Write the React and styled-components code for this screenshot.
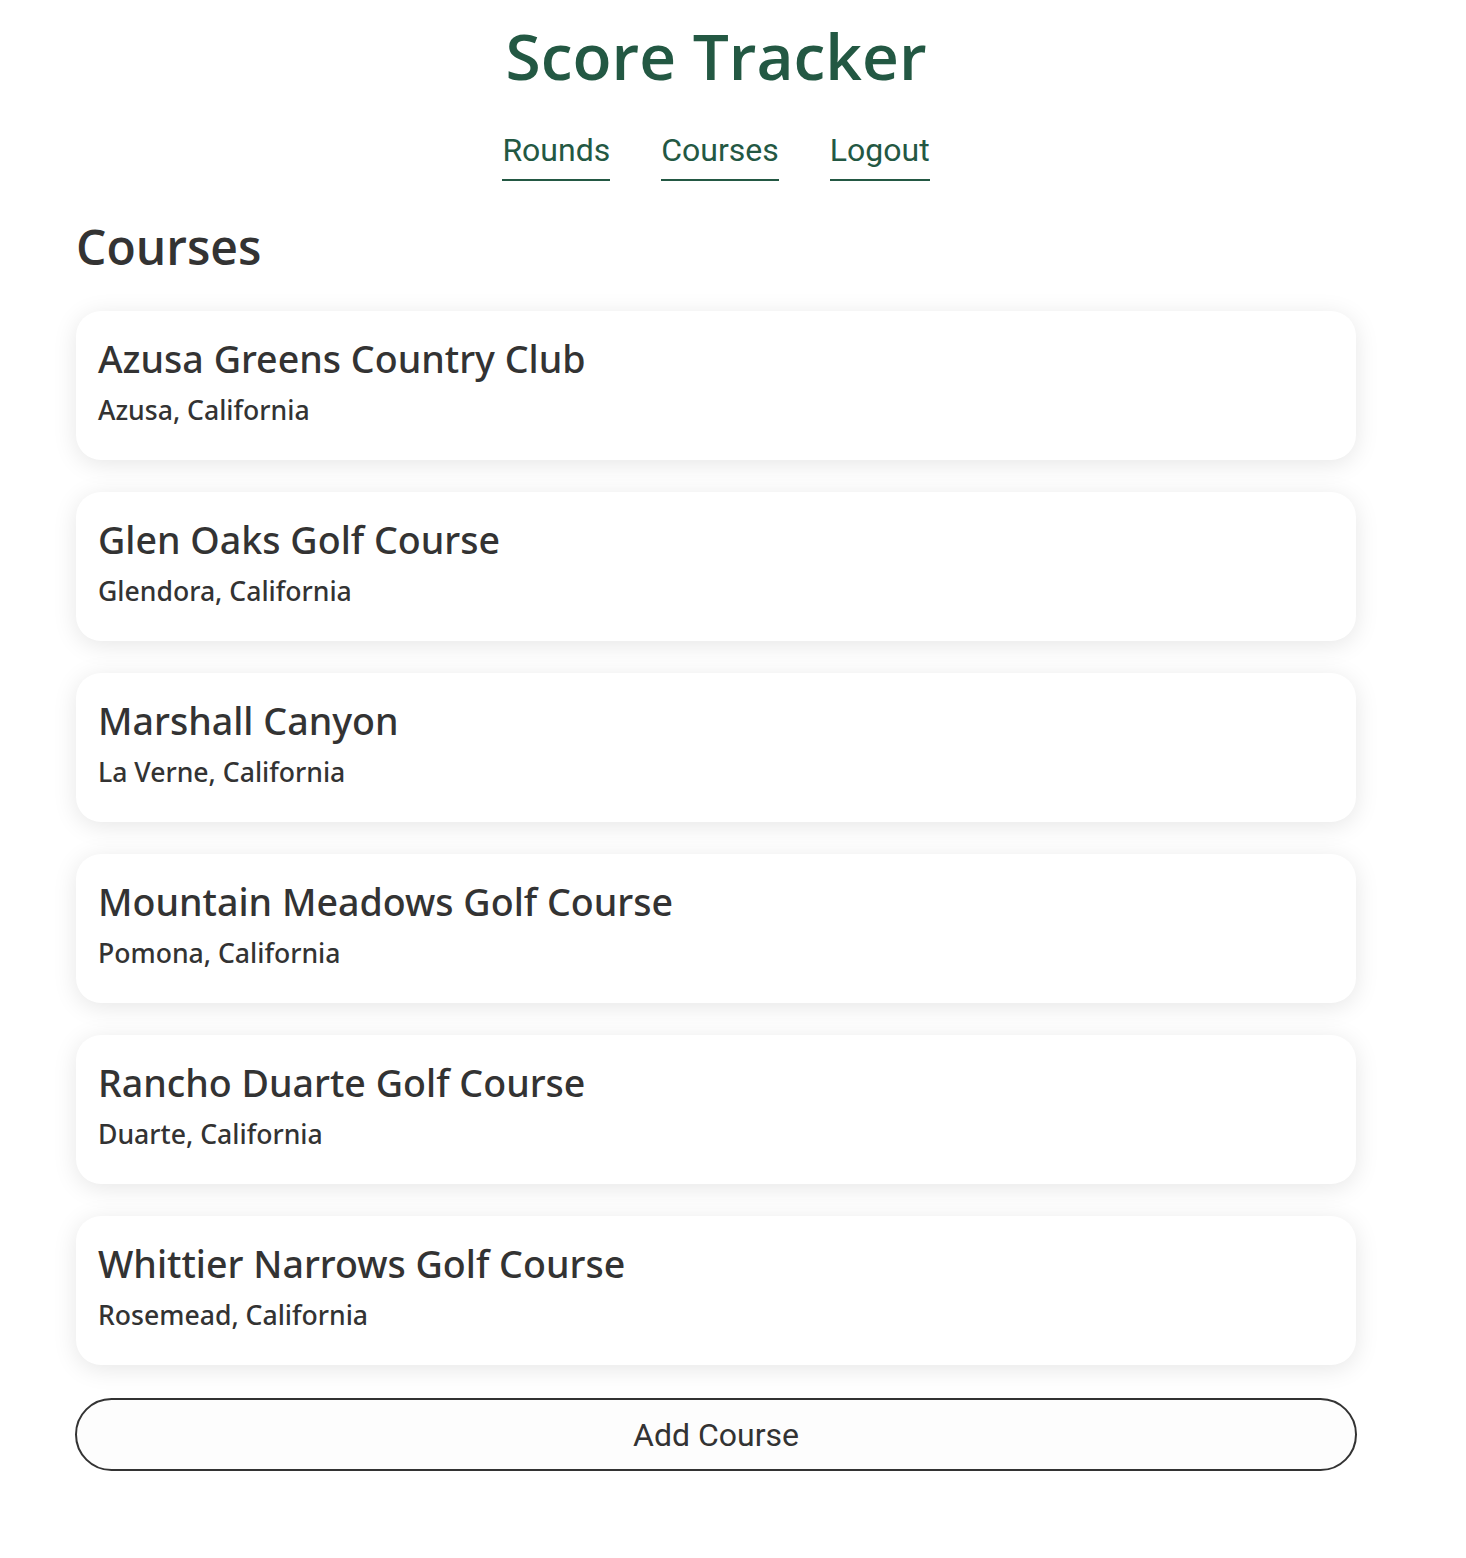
import React from "react";
import styled, { createGlobalStyle } from "styled-components";

const GlobalStyle = createGlobalStyle`
  html, body { margin: 0; padding: 0; background: #ffffff; }
  body { font-family: "Noto Sans", "Open Sans", sans-serif; color: #333333; }
  * { box-sizing: border-box; }
`;

const Page = styled.div`
  width: 1432px;
  padding: 0 76px 80px;
`;

const Header = styled.header`
  display: flex;
  flex-direction: column;
  align-items: center;
`;

const Title = styled.h1`
  margin: 16px 0 0;
  font-family: "Open Sans", sans-serif;
  font-weight: 600;
  font-size: 64px;
  line-height: 80px;
  color: #235843;
`;

const Nav = styled.nav`
  display: flex;
  gap: 51px;
  margin-top: 35px;
`;

const NavLink = styled.a`
  font-family: Roboto, sans-serif;
  font-size: 32px;
  line-height: 38px;
  color: #235843;
  text-decoration: none;
  padding-bottom: 10px;
  border-bottom: 2px solid #235843;
  cursor: pointer;
`;

const Main = styled.main`
  margin-top: 36px;
`;

const Heading = styled.h2`
  margin: 0 0 34px;
  font-family: "Open Sans", sans-serif;
  font-weight: 600;
  font-size: 48px;
  line-height: 60px;
  color: #333333;
`;

const List = styled.div`
  display: flex;
  flex-direction: column;
  gap: 32px;
`;

const Card = styled.div`
  height: 149px;
  background: #ffffff;
  border-radius: 25px;
  box-shadow: 0 4px 24px rgba(0, 0, 0, 0.1);
  padding: 24px 22px 0;
`;

const CourseName = styled.h3`
  margin: 0;
  font-family: "Noto Sans", sans-serif;
  font-weight: 500;
  font-size: 37.6px;
  line-height: 48px;
  color: #333333;
`;

const Location = styled.p`
  margin: 10px 0 0;
  font-family: "Noto Sans", sans-serif;
  font-weight: 500;
  font-size: 26.6px;
  line-height: 34px;
  color: #333333;
`;

const AddButton = styled.button`
  display: block;
  width: calc(100% + 2px);
  margin: 33px -1px 0;
  height: 73px;
  background: #fdfdfd;
  border: 2px solid #333333;
  border-radius: 37px;
  font-family: Roboto, sans-serif;
  font-size: 32px;
  color: #333333;
  cursor: pointer;
`;

const courses = [
  ["Azusa Greens Country Club", "Azusa, California"],
  ["Glen Oaks Golf Course", "Glendora, California"],
  ["Marshall Canyon", "La Verne, California"],
  ["Mountain Meadows Golf Course", "Pomona, California"],
  ["Rancho Duarte Golf Course", "Duarte, California"],
  ["Whittier Narrows Golf Course", "Rosemead, California"],
];

export default function App() {
  return (
    <>
      <GlobalStyle />
      <Page>
        <Header>
          <Title>Score Tracker</Title>
          <Nav>
            <NavLink>Rounds</NavLink>
            <NavLink>Courses</NavLink>
            <NavLink>Logout</NavLink>
          </Nav>
        </Header>
        <Main>
          <Heading>Courses</Heading>
          <List>
            {courses.map(([name, loc]) => (
              <Card key={name}>
                <CourseName>{name}</CourseName>
                <Location>{loc}</Location>
              </Card>
            ))}
          </List>
          <AddButton>Add Course</AddButton>
        </Main>
      </Page>
    </>
  );
}
